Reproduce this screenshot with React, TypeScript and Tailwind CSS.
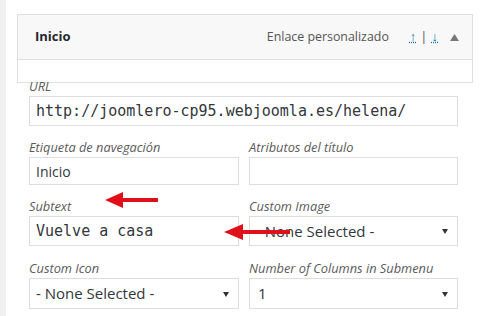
import type { ReactNode } from 'react';

function Label({ children }: { children: ReactNode }) {
  return <p className="mb-[2px] h-[16px] text-[12.8px] italic leading-[16px] text-[#5a5a5a] whitespace-nowrap">{children}</p>;
}

function TextInput({ value, mono, h }: { value?: string; mono?: boolean; h: string }) {
  return (
    <div
      className={`flex items-center border border-[#dddddd] bg-white px-[6px] text-[#32373c] ${h} ${
        mono ? "font-['DejaVu_Sans_Mono',monospace] text-[15px]" : 'text-[14px]'
      }`}
    >
      {value}
    </div>
  );
}

function Select({ value, h = 'h-[31px]', pad = 'pl-[6px]' }: { value: string; h?: string; pad?: string }) {
  return (
    <div className={`flex items-center justify-between border border-[#dddddd] bg-white pr-[9px] text-[15px] text-[#32373c] ${h} ${pad}`}>
      <span>{value}</span>
      <svg width="6" height="6" viewBox="0 0 6 6">
        <path d="M0 1h6L3 6z" fill="#333" />
      </svg>
    </div>
  );
}

export default function App() {
  return (
    <div className="relative flex h-[316px] w-[491px] overflow-hidden bg-white font-['Open_Sans',sans-serif]">
      <div className="w-[6px] shrink-0 bg-[#f1f1f1]" />

      <div className="flex flex-col pl-[11px] pt-[14px]">
        <div className="flex h-[46px] w-[456px] items-center border border-[#dfdfdf] bg-[#f8f8f8] pl-[17px] pr-[13px]">
          <span className="text-[13px] font-bold text-[#23282d]">Inicio</span>
          <span className="ml-auto text-[12.4px] text-[#555]">Enlace personalizado</span>
          <span className="ml-[21px] flex items-center text-[13px]">
            <span className="text-[#0073aa] underline decoration-dotted">↑</span>
            <span className="mx-[4px] text-[#555]">|</span>
            <span className="text-[#0073aa] underline decoration-dotted">↓</span>
          </span>
          <svg className="ml-[12px]" width="9" height="7" viewBox="0 0 9 7">
            <path d="M0 7L4.5 0L9 7z" fill="#777" />
          </svg>
        </div>
        <div className="h-[23px] w-[456px] border-x border-b border-[#dfdfdf]" />

        <div className="ml-[12px] w-[429px]">
          <div className="-mt-[5px]">
            <Label>URL</Label>
            <TextInput mono value="http://joomlero-cp95.webjoomla.es/helena/" h="h-[30px]" />
          </div>

          <div className="mt-[13px] grid grid-cols-[210px_209px] gap-x-[10px]">
            <div>
              <Label>Etiqueta de navegación</Label>
              <TextInput value="Inicio" h="h-[28px]" />
            </div>
            <div>
              <Label>Atributos del título</Label>
              <TextInput h="h-[28px]" />
            </div>
          </div>

          <div className="mt-[13px] grid grid-cols-[210px_209px] gap-x-[10px]">
            <div>
              <Label>Subtext</Label>
              <TextInput mono value="Vuelve a casa" h="h-[30px]" />
            </div>
            <div>
              <Label>Custom Image</Label>
              <Select value="- None Selected -" h="h-[30px]" />
            </div>
          </div>

          <div className="mt-[14px] grid grid-cols-[210px_209px] gap-x-[10px]">
            <div>
              <Label>Custom Icon</Label>
              <Select value="- None Selected -" />
            </div>
            <div>
              <Label>Number of Columns in Submenu</Label>
              <Select value="1" pad="pl-[8px]" />
            </div>
          </div>
        </div>
      </div>

      <svg className="pointer-events-none absolute left-0 top-0" width="491" height="316" viewBox="0 0 491 316">
        <path d="M105 200L123 192V198H158V202H123V208z" fill="#e0101b" />
        <path d="M224 232L243 224V230H290V234H243V240z" fill="#e0101b" />
      </svg>
    </div>
  );
}
